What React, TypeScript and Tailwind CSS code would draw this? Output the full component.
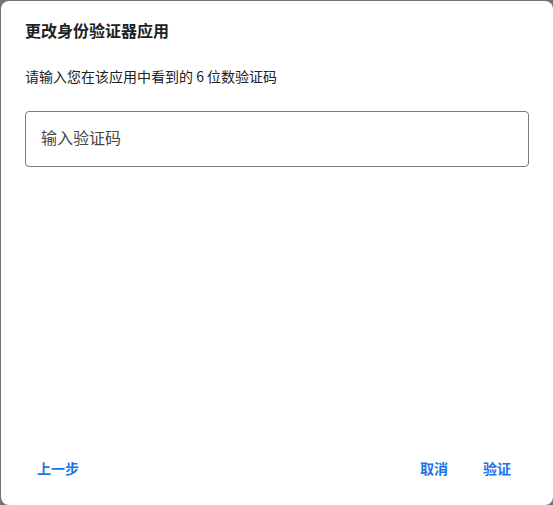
import React, { useState } from "react";

const font = { fontFamily: '"Noto Sans CJK SC", "Noto Sans", sans-serif' };

export default function App() {
  const [code, setCode] = useState("");

  return (
    <div className="h-[505px] w-[553px] overflow-hidden bg-[#737373] pl-[1px] pt-[1px]" style={font}>
      <div className="flex h-[504px] w-[552px] flex-col rounded-lg bg-white">
        <div className="px-6 pt-[17px]">
          <h1 className="text-[16px] leading-6 font-bold text-[#202124]">更改身份验证器应用</h1>
          <p className="mt-6 text-[14px] leading-5 text-[#202124]">
            请输入您在该应用中看到的 6 位数验证码
          </p>
          <input
            type="text"
            value={code}
            onChange={(e) => setCode(e.target.value)}
            placeholder="输入验证码"
            className="mt-[25px] h-[56px] w-full rounded border border-[#7a7a7a] pb-[5px] px-[15px] text-[16px] text-[#202124] outline-none placeholder:text-[#474747]"
          />
        </div>
        <div className="mt-auto flex items-center pb-[21px] pl-6 pr-[30px]">
          <button className="h-8 rounded px-3 text-[14px] font-bold text-[#1a73e8]">上一步</button>
          <div className="ml-auto flex gap-[11px]">
            <button className="h-8 rounded px-3 text-[14px] font-bold text-[#1a73e8]">取消</button>
            <button className="h-8 rounded px-3 text-[14px] font-bold text-[#1a73e8]">验证</button>
          </div>
        </div>
      </div>
    </div>
  );
}
